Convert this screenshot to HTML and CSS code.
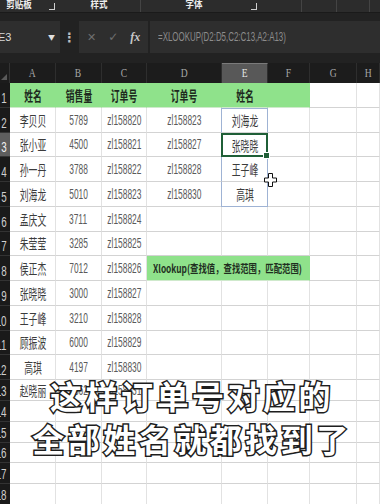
FILE: index.html
```html
<!DOCTYPE html>
<html lang="zh">
<head>
<meta charset="utf-8">
<link rel="stylesheet" href="styles.css">
</head>
<body>
<div class="ribbon">
  <span class="rl l1">剪贴板</span>
  <span class="launch l2"></span>
  <span class="rl l3">样式</span>
  <span class="rsep s1"></span>
  <span class="rl l4">字体</span>
  <span class="launch l5"></span>
  <span class="rsep s2"></span>
  <span class="rsep s3"></span>
  <span class="rsep s4"></span>
</div>
<div class="fbar">
  <div class="namebox"><span class="nb">E3</span><span class="drop">▼</span></div>
  <div class="dots">⋮</div>
  <div class="fxbox"><span class="fx-x">✕</span><span class="fx-ok">✓</span><span class="fx-f">fx</span></div>
  <div class="formula"><span class="ft">=XLOOKUP(D2:D5,C2:C13,A2:A13)</span></div>
</div>
<div class="sheet">
  <div class="corner"><span class="tri"></span></div>
  <div class="ch"><span>A</span></div><div class="ch"><span>B</span></div><div class="ch"><span>C</span></div><div class="ch"><span>D</span></div><div class="ch sel"><span>E</span></div><div class="ch"><span>F</span></div><div class="ch"><span>G</span></div><div class="ch"><span>H</span></div>

  <div class="rh"><span>1</span></div><div class="c g"><span class="h">姓名</span></div><div class="c g"><span class="h">销售量</span></div><div class="c g"><span class="h">订单号</span></div><div class="c g"><span class="h">订单号</span></div><div class="c g"><span class="h">姓名</span></div><div class="c g"></div><div class="c"></div><div class="c"></div>

  <div class="rh"><span>2</span></div><div class="c"><span class="n">李贝贝</span></div><div class="c"><span class="d">5789</span></div><div class="c"><span class="d">zl158820</span></div><div class="c"><span class="d">zl158823</span></div><div class="c e e-top"><span class="n">刘海龙</span></div><div class="c"></div><div class="c"></div><div class="c"></div>

  <div class="rh rsel"><span>3</span></div><div class="c"><span class="n">张小亚</span></div><div class="c"><span class="d">4500</span></div><div class="c"><span class="d">zl158821</span></div><div class="c"><span class="d">zl158827</span></div><div class="c e active"><span class="n">张晓晓</span><span class="handle"></span></div><div class="c"></div><div class="c"></div><div class="c"></div>

  <div class="rh"><span>4</span></div><div class="c"><span class="n">孙一丹</span></div><div class="c"><span class="d">3788</span></div><div class="c"><span class="d">zl158822</span></div><div class="c"><span class="d">zl158828</span></div><div class="c e"><span class="n">王子峰</span></div><div class="c"></div><div class="c"></div><div class="c"></div>

  <div class="rh"><span>5</span></div><div class="c"><span class="n">刘海龙</span></div><div class="c"><span class="d">5010</span></div><div class="c"><span class="d">zl158823</span></div><div class="c"><span class="d">zl158830</span></div><div class="c e e-bot"><span class="n">高琪</span></div><div class="c"></div><div class="c"></div><div class="c"></div>

  <div class="rh"><span>6</span></div><div class="c"><span class="n">孟庆文</span></div><div class="c"><span class="d">3711</span></div><div class="c"><span class="d">zl158824</span></div><div class="c"></div><div class="c"></div><div class="c"></div><div class="c"></div><div class="c"></div>

  <div class="rh"><span>7</span></div><div class="c"><span class="n">朱莹莹</span></div><div class="c"><span class="d">3285</span></div><div class="c"><span class="d">zl158825</span></div><div class="c"></div><div class="c"></div><div class="c"></div><div class="c"></div><div class="c"></div>

  <div class="rh"><span>8</span></div><div class="c"><span class="n">侯正杰</span></div><div class="c"><span class="d">7012</span></div><div class="c"><span class="d">zl158826</span></div><div class="c g span3"><span class="tip">Xlookup(查找值，查找范围，匹配范围)</span></div><div class="c"></div><div class="c"></div>

  <div class="rh"><span>9</span></div><div class="c"><span class="n">张晓晓</span></div><div class="c"><span class="d">3000</span></div><div class="c"><span class="d">zl158827</span></div><div class="c"></div><div class="c"></div><div class="c"></div><div class="c"></div><div class="c"></div>

  <div class="rh"><span>10</span></div><div class="c"><span class="n">王子峰</span></div><div class="c"><span class="d">3210</span></div><div class="c"><span class="d">zl158828</span></div><div class="c"></div><div class="c"></div><div class="c"></div><div class="c"></div><div class="c"></div>

  <div class="rh"><span>11</span></div><div class="c"><span class="n">顾振波</span></div><div class="c"><span class="d">6000</span></div><div class="c"><span class="d">zl158829</span></div><div class="c"></div><div class="c"></div><div class="c"></div><div class="c"></div><div class="c"></div>

  <div class="rh"><span>12</span></div><div class="c"><span class="n">高琪</span></div><div class="c"><span class="d">4197</span></div><div class="c"><span class="d">zl158830</span></div><div class="c"></div><div class="c"></div><div class="c"></div><div class="c"></div><div class="c"></div>

  <div class="rh"><span>13</span></div><div class="c"><span class="n">赵晓丽</span></div><div class="c"><span class="d">4862</span></div><div class="c"><span class="d">zl158831</span></div><div class="c"></div><div class="c"></div><div class="c"></div><div class="c"></div><div class="c"></div>

  <div class="rh"><span>14</span></div><div class="c"></div><div class="c"></div><div class="c"></div><div class="c"></div><div class="c"></div><div class="c"></div><div class="c"></div><div class="c"></div>
  <div class="rh"><span>15</span></div><div class="c"></div><div class="c"></div><div class="c"></div><div class="c"></div><div class="c"></div><div class="c"></div><div class="c"></div><div class="c"></div>
  <div class="rh"><span>16</span></div><div class="c"></div><div class="c"></div><div class="c"></div><div class="c"></div><div class="c"></div><div class="c"></div><div class="c"></div><div class="c"></div>
  <div class="rh"><span>17</span></div><div class="c"></div><div class="c"></div><div class="c"></div><div class="c"></div><div class="c"></div><div class="c"></div><div class="c"></div><div class="c"></div>
  <div class="rh"><span>18</span></div><div class="c"></div><div class="c"></div><div class="c"></div><div class="c"></div><div class="c"></div><div class="c"></div><div class="c"></div><div class="c"></div>
</div>

<svg class="cursor" width="13" height="14" viewBox="0 0 13 14">
  <path d="M4.5 0.5H8.5V5H12.5V9H8.5V13.5H4.5V9H0.5V5H4.5Z" fill="#fff" stroke="#111" stroke-width="1"/>
</svg>

<div class="caption">
  <div class="cl">这样订单号对应的</div>
  <div class="cl">全部姓名就都找到了</div>
</div>
</body>
</html>
```
FILE: styles.css
```css
html, body {
  margin: 0;
  padding: 0;
}
body {
  width: 380px;
  height: 504px;
  overflow: hidden;
  position: relative;
  background: #222222;
  font-family: "Noto Sans CJK SC", "Liberation Sans", sans-serif;
}

/* ribbon */
.ribbon {
  height: 12px;
  background: #2c2c2c;
  display: flex;
  align-items: flex-end;
  overflow: hidden;
  border-bottom: 1px solid #1a1a1a;
}
.rl {
  color: #ececec;
  font-weight: 700;
  font-size: 10px;
  line-height: 10px;
  margin-bottom: 3px;
  display: inline-block;
  transform: scaleX(0.85);
}
.launch {
  width: 5px;
  height: 6px;
  border-right: 1px solid #cfcfcf;
  border-bottom: 1px solid #cfcfcf;
  margin-bottom: 2px;
}
.rsep {
  width: 1px;
  height: 12px;
  background: #444;
}
.l1 { margin-left: 4px; }
.l2 { margin-left: 15px; }
.l3 { margin-left: 34px; }
.s1 { margin-left: 31px; }
.l4 { margin-left: 43px; }
.l5 { margin-left: 47px; }
.s2 { margin-left: 44px; }
.s3 { margin-left: 34px; }
.s4 { margin-left: 32px; }

/* formula bar */
.fbar {
  margin-top: 8px;
  height: 32px;
  display: flex;
}
.namebox {
  width: 60px;
  background: #2e2e2e;
  display: flex;
  align-items: center;
  justify-content: space-between;
  padding-right: 5px;
  box-sizing: border-box;
  overflow: hidden;
}
.nb {
  color: #d8d8d8;
  font: 11px "Liberation Sans", sans-serif;
  margin-left: -2px;
}
.drop {
  color: #e0e0e0;
  font-size: 7px;
}
.dots {
  width: 19px;
  color: #bdbdbd;
  font: bold 13px "DejaVu Sans", sans-serif;
  display: flex;
  align-items: center;
  justify-content: center;
}
.fxbox {
  width: 69px;
  background: #2e2e2e;
  display: flex;
  align-items: center;
  color: #6e6e6e;
  font-family: "DejaVu Sans", sans-serif;
}
.fx-x { margin-left: 8px; font-size: 11px; }
.fx-ok { margin-left: 12px; font-size: 12px; }
.fx-f {
  margin-left: 12px;
  font: italic bold 12px "Liberation Serif", serif;
  color: #c8c8c8;
}
.formula {
  flex: 1;
  margin-left: 2px;
  background: #2e2e2e;
  display: flex;
  align-items: center;
  padding-left: 8px;
}
.ft {
  display: inline-block;
  color: #8c8c8c;
  font: 12px "Liberation Sans", sans-serif;
  transform: scaleX(0.66);
  transform-origin: left center;
  white-space: nowrap;
}

/* sheet */
.sheet {
  margin-top: 10px;
  display: grid;
  grid-template-columns: 10px 46px 46px 45px 75px 46px 42px 47px 23px;
  grid-template-rows: 20px repeat(12, 24.75px) 21px repeat(5, 20.75px);
  position: relative;
}
.corner {
  background: #1c1c1c;
  border-right: 1px solid #333;
  box-sizing: border-box;
  position: relative;
}
.tri {
  position: absolute;
  right: 2px;
  bottom: 3px;
  width: 0;
  height: 0;
  border-left: 6px solid transparent;
  border-bottom: 6px solid #5a5a5a;
}
.ch {
  background: #1c1c1c;
  border-right: 1px solid #2e2e2e;
  box-sizing: border-box;
  display: flex;
  align-items: center;
  justify-content: center;
  color: #a8a8a8;
  font: 12px "Liberation Serif", serif;
}
.ch span {
  display: inline-block;
  transform: scaleX(0.8);
}
.ch.sel {
  background: #585858;
  color: #e6e6e6;
  border-top: 1px solid #7a7a7a;
}
.rh {
  background: #1a1a1a;
  border-bottom: 1px solid #333;
  box-sizing: border-box;
  overflow: hidden;
  display: flex;
  align-items: flex-end;
  justify-content: flex-end;
  padding-right: 3px;
  padding-bottom: 1px;
  color: #cfcfcf;
  font: 14px "Liberation Sans", sans-serif;
}
.rh span {
  display: inline-block;
  transform: scaleX(0.7);
  transform-origin: right center;
  white-space: nowrap;
}
.rh.rsel {
  background: #5e5e5e;
  color: #f0f0f0;
}
.c {
  background: #ffffff;
  border-right: 1px solid #e2e2e2;
  border-bottom: 1px solid #d3d3d3;
  box-sizing: border-box;
  display: flex;
  align-items: center;
  justify-content: center;
  overflow: visible;
  position: relative;
  white-space: nowrap;
}
.c.g {
  background: #8fe28b;
  border-right-color: #8fe28b;
  border-bottom-color: #cfe9cc;
}
.n, .h, .d {
  display: inline-block;
  transform: scaleX(0.63);
  white-space: nowrap;
}
.n {
  font-size: 14px;
  color: #3c3c3c;
}
.h {
  font-size: 14px;
  font-weight: 700;
  color: #1e2a1e;
}
.d {
  font: 14px "Liberation Sans", sans-serif;
  color: #5a5a5a;
  transform: scaleX(0.6);
}
.span3 {
  grid-column: span 3;
  justify-content: flex-start;
  padding-left: 6px;
}
.tip {
  display: inline-block;
  font-size: 11px;
  font-weight: 700;
  color: #1f2f1f;
  transform: scaleX(0.76);
  transform-origin: left center;
  white-space: nowrap;
}

/* selection range E2:E5 */
.e {
  border-left: 1px solid #9fb3d4;
  border-right: 1px solid #9fb3d4;
  margin-left: -1px;
}
.e-top { border-top: 1px solid #9fb3d4; }
.e-bot { border-bottom: 1px solid #9fb3d4; }
.active {
  border: 2px solid #1f5f37;
  margin-left: -1px;
}
.handle {
  position: absolute;
  right: -4px;
  bottom: -4px;
  width: 5px;
  height: 5px;
  background: #1f5f37;
  border: 1px solid #fff;
  z-index: 2;
}

.cursor {
  position: absolute;
  left: 264px;
  top: 173px;
}

/* caption overlay */
.caption {
  position: absolute;
  left: 0;
  top: 374px;
  width: 380px;
  text-align: center;
}
.cl {
  font-size: 32px;
  line-height: 43px;
  font-weight: 700;
  letter-spacing: 3.5px;
  padding-left: 4px;
  color: #ffffff;
  -webkit-text-stroke: 3px #1e1e1e;
  paint-order: stroke fill;
}
```
